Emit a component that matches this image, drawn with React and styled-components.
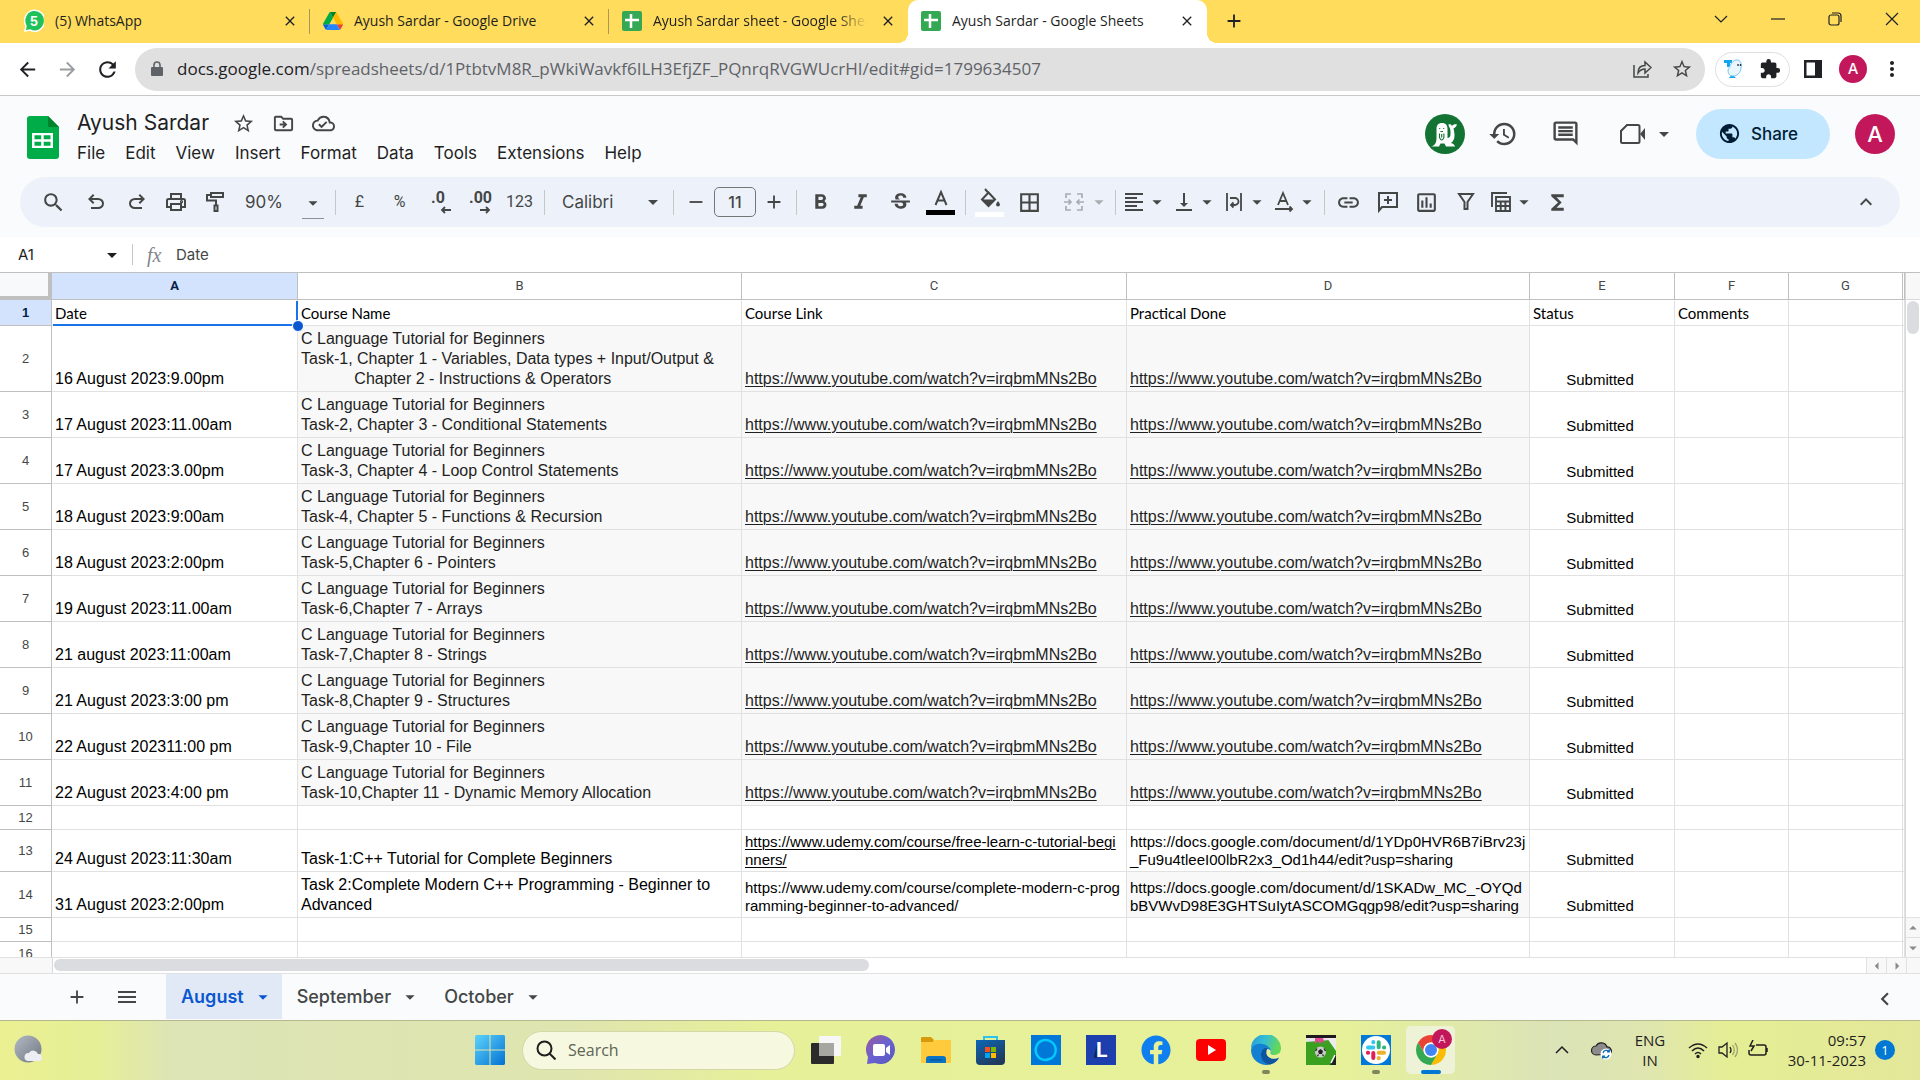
import React from 'react';
import styled, { createGlobalStyle, css } from 'styled-components';
import {
  MdAdd, MdArrowBack, MdArrowDropDown, MdArrowForward, MdArrowLeft, MdArrowRight,
  MdArrowDropUp, MdBorderAll, MdChevronLeft, MdClose, MdExtension, MdFormatAlignLeft,
  MdFormatBold, MdFormatColorFill, MdFormatItalic, MdFunctions, MdHistory,
  MdKeyboardArrowUp, MdLink, MdMenu, MdMoreVert, MdOutlineCloudDone,
  MdOutlineComment, MdOutlineDriveFileMove, MdOutlineInsertChart, MdPublic,
  MdRefresh, MdRemove, MdSearch, MdStarBorder, MdStrikethroughS, MdVerticalAlignBottom,
} from 'react-icons/md';
import { FaFacebook } from 'react-icons/fa';

const ui = '"Inter", "Roboto", sans-serif';
const system = '"Open Sans", "Noto Sans", sans-serif';
const arial = '"Liberation Sans", Arial, sans-serif';
const ink = '#444746';

const GlobalStyle = createGlobalStyle`
  *, *::before, *::after { box-sizing: border-box; }
  body { margin: 0; font-family: ${ui}; color: #1f1f1f; }
  button, input, select { margin: 0; padding: 0; border: 0; background: none; color: inherit; font: inherit; }
  svg { display: block; flex: none; }
`;

const Shell = styled.div`
  display: flex;
  flex-direction: column;
  height: 100vh;
  min-width: 1200px;
  overflow: hidden;
  background: #fff;
`;

/* ---------- browser frame ---------- */

const TabStrip = styled.header`
  display: flex;
  height: 43px;
  padding-left: 11px;
  background: #ffdc5c;
  font: 14px/20px ${system};
`;

const Tab = styled.div`
  position: relative;
  display: flex;
  align-items: center;
  gap: 11px;
  width: 299px;
  padding: 0 10px 2px 13px;
  ${(p) => p.$divider && css`
    &::after {
      content: '';
      position: absolute;
      right: 0;
      top: 9px;
      height: 25px;
      border-right: 1px solid #a8965a;
    }
  `}
  ${(p) => p.$active && css`
    background: #fff;
    border-radius: 10px 10px 0 0;
    &::before, &::after {
      content: '';
      position: absolute;
      bottom: 0;
      width: 10px;
      height: 10px;
    }
    &::before { left: -10px; background: radial-gradient(circle at 0 0, transparent 10px, #fff 10px); }
    &::after { right: -10px; background: radial-gradient(circle at 100% 0, transparent 10px, #fff 10px); }
  `}
`;

const TabTitle = styled.span`
  flex: 1;
  min-width: 0;
  overflow: hidden;
  white-space: nowrap;
  ${(p) => p.$fade && css`mask-image: linear-gradient(to right, #000 86%, transparent);`}
`;

const IconButton = styled.button`
  display: flex;
  align-items: center;
  justify-content: center;
  width: ${(p) => p.$w || 40}px;
  height: ${(p) => p.$h || 40}px;
  color: ${(p) => p.$color || ink};
  flex: none;
`;

const NewTab = styled(IconButton)`margin: 1px 0 0 7px;`;

const WindowControls = styled.div`
  display: flex;
  margin-left: auto;
`;

const AddressRow = styled.div`
  display: flex;
  align-items: center;
  height: 53px;
  padding: 0 4px 0 7px;
  border-bottom: 1px solid #c6c9cc;
  background: #fff;
`;

const UrlBox = styled.div`
  display: flex;
  flex: 1;
  align-items: center;
  height: 43px;
  margin: 0 10px 0 8px;
  padding: 0 3px 0 15px;
  border-radius: 22px;
  background: #e0e0e0;
  color: #5f6368;
  font: 17px/24px ${system};
`;

const UrlText = styled.a`
  flex: 1;
  margin-left: 13px;
  color: #5f6368;
  text-decoration: none;
  white-space: nowrap;
  b { color: #202124; font-weight: 400; }
`;

const ExtensionPill = styled.div`
  display: flex;
  align-items: center;
  justify-content: space-around;
  width: 75px;
  height: 35px;
  margin-right: 3px;
  border: 1px solid #dfdfe1;
  border-radius: 18px;
`;

const Avatar = styled.button`
  width: ${(p) => p.$size}px;
  height: ${(p) => p.$size}px;
  border-radius: 50%;
  background: #c2185b;
  color: #fff;
  font: ${(p) => (p.$size > 30 ? '500 22px/40px' : '500 15px/28px')} ${ui};
`;

const ProfileButton = styled(Avatar)`margin-left: 6px;`;

/* ---------- document header ---------- */

const DocHeader = styled.header`
  display: flex;
  height: 81px;
  padding: 0 25px 0 27px;
  background: #f9fbfd;
`;

const DocLogo = styled.div`padding-top: 20px;`;

const DocInfo = styled.div`
  flex: 1;
  padding: 10px 0 0 8px;
`;

const TitleRow = styled.div`
  display: flex;
  align-items: center;
  height: 34px;
  padding-left: 10px;
`;

const DocTitle = styled.h1`
  margin: 0 14px 0 0;
  font: 400 21px/32px ${ui};
`;

const MenuBar = styled.nav`
  display: flex;
  button { height: 26px; padding: 0 10px; font: 17px/26px ${ui}; }
`;

const DocActions = styled.div`
  display: flex;
  align-items: center;
  height: 75px;
`;

const CallButton = styled(IconButton)`
  justify-content: flex-end;
  gap: 6px;
`;

const ShareButton = styled.button`
  display: flex;
  align-items: center;
  gap: 10px;
  width: 134px;
  height: 50px;
  margin: 0 25px 0 20px;
  padding-left: 22px;
  border-radius: 25px;
  background: #c2e7ff;
  color: #001d35;
  font: 500 17px/24px ${ui};
`;

/* ---------- toolbar ---------- */

const ToolbarArea = styled.div`
  height: 60px;
  padding: 0 20px;
  background: #f9fbfd;
`;

const ToolbarBox = styled.div`
  display: flex;
  align-items: center;
  height: 50px;
  padding: 0 15px 0 9px;
  border-radius: 25px;
  background: #edf2fa;
  color: ${ink};
`;

const ToolGroup = styled.div`
  display: flex;
  align-items: center;
  gap: ${(p) => p.$gap || 0}px;
  padding: 0 4px;
  ${(p) => !p.$last && css`
    &::after {
      content: '';
      height: 25px;
      margin-left: 4px;
      margin-right: -4px;
      border-right: 1px solid #c7c7c7;
    }
  `}
`;

const Tool = styled.button`
  display: flex;
  align-items: center;
  justify-content: center;
  width: ${(p) => p.$w || 39}px;
  height: 37px;
  flex: none;
  font: 400 16px/20px "Roboto", sans-serif;
`;

const MergeTool = styled(Tool)`
  justify-content: flex-end;
  gap: 2px;
  opacity: 0.4;
`;

const SwatchTool = styled(Tool)`
  flex-direction: column;
  gap: 1px;
  &::after {
    content: '';
    width: 29px;
    height: 5px;
    background: ${(p) => p.$swatch};
  }
`;

const SelectWrap = styled.div`
  display: flex;
  align-items: center;
  padding-right: 4px;
  select {
    appearance: none;
    width: ${(p) => p.$w}px;
    height: 34px;
    padding-left: 13px;
    font: 17px/24px ${ui};
  }
  svg { margin-left: -32px; pointer-events: none; }
`;

const ZoomSelect = styled(SelectWrap)`
  padding-right: 7px;
  select { padding-left: 11px; }
  svg { box-sizing: content-box; margin-left: -31px; padding: 7px 0 4px; border-bottom: 1px solid #8d9197; }
`;

const SizeInput = styled.input`
  width: 42px;
  height: 30px;
  border: 1px solid #747775;
  border-radius: 5px;
  font: 500 16px/24px ${ui};
  text-align: center;
`;

const Spacer = styled.div`flex: 1;`;

/* ---------- formula bar ---------- */

const FormulaBar = styled.div`
  display: flex;
  align-items: center;
  height: 35px;
  padding-left: 18px;
  background: #fff;
`;

const NameBox = styled.input`
  width: 82px;
  font: 15px/20px ${ui};
`;

const Divider = styled.span`
  height: 21px;
  margin: 0 14px 0 8px;
  border-right: 1px solid #c7c7c7;
`;

const Fx = styled.span`
  width: 29px;
  color: #80868b;
  font: italic 20px/24px "Liberation Serif", serif;
`;

const FormulaInput = styled.input`
  flex: 1;
  color: ${ink};
  font: 15px/20px ${ui};
`;

/* ---------- sheet ---------- */

const SheetArea = styled.div`
  display: flex;
  flex: 1;
  min-height: 0;
  border-top: 1px solid #c0c0c0;
`;

const GridClip = styled.main`
  flex: 1;
  min-width: 0;
  overflow: hidden;
`;

const Grid = styled.table`
  width: 100%;
  table-layout: fixed;
  border-collapse: separate;
  border-spacing: 0;
`;

const ColHead = styled.th`
  height: 27px;
  padding: 0;
  border-right: 1px solid #c0c0c0;
  border-bottom: 1px solid #c0c0c0;
  background: ${(p) => (p.$selected ? '#d3e3fd' : '#fff')};
  color: ${(p) => (p.$selected ? '#041e49' : ink)};
  font: ${(p) => (p.$selected ? 700 : 400)} 13px/16px "Roboto", ${arial};
`;

const Corner = styled.td`
  border-right: 4px solid #c0c0c0;
  border-bottom: 4px solid #c0c0c0;
  background: #f8f9fa;
`;

const RowHead = styled(ColHead)`
  height: ${(p) => p.$h}px;
  font-family: ${arial};
`;

const Cell = styled.td`
  position: relative;
  height: ${(p) => p.$h}px;
  padding: 0 0 2px 3px;
  border-right: 1px solid #e1e1e1;
  border-bottom: 1px solid #e1e1e1;
  background: ${(p) => (p.$shade ? '#f8f8f8' : '#fff')};
  color: ${(p) => (p.$shade && !p.$small ? '#1f1f1f' : '#000')};
  font: ${(p) => (p.$small ? '15px/18px' : '16px/20px')} ${arial};
  vertical-align: bottom;
  white-space: pre;
  ${(p) => p.$head && css`font: 15px/20px "Lato", sans-serif;`}
  ${(p) => p.$center && css`padding: 0 4px 2px 0; text-align: center;`}
  a { color: inherit; text-underline-offset: 2px; text-decoration-thickness: 1px; }
`;

const SelectionFrame = styled.span`
  position: absolute;
  z-index: 1;
  inset: 1px -1px -1px 1px;
  border: solid #1a73e8;
  border-width: 0 2px 2px 0;
  &::after {
    content: '';
    position: absolute;
    right: -8px;
    bottom: -8px;
    width: 12px;
    height: 12px;
    border: 1px solid #fff;
    border-radius: 50%;
    background: #0b57d0;
  }
`;

const VScroll = styled.div`
  display: flex;
  flex-direction: column;
  width: 15px;
  border-left: 1px solid #d9d9d9;
  background: #fff;
`;

const VHead = styled.div`
  height: 27px;
  border-bottom: 1px solid #d9d9d9;
  background: #f8f8f8;
`;

const VThumb = styled.div`
  width: 12px;
  height: 33px;
  margin: 1px 1px auto;
  border-radius: 6px;
  background: #dadce0;
`;

const ScrollButton = styled.button`
  display: flex;
  align-items: center;
  justify-content: center;
  width: ${(p) => p.$w}px;
  height: ${(p) => p.$h}px;
  border: solid #e1e1e1;
  border-width: ${(p) => (p.$side ? '0 0 0 1px' : '1px 0 0')};
  background: #f8f8f8;
  color: #8a8a8a;
`;

const HScroll = styled.div`
  display: flex;
  height: 17px;
  border: solid #e1e1e1;
  border-width: 1px 0;
  background: #fff;
`;

const HCorner = styled.div`
  width: 53px;
  border-right: 1px solid #d9d9d9;
  background: #f8f8f8;
`;

const HTrack = styled.div`
  flex: 1;
  padding: 1px;
`;

const HThumb = styled.div`
  width: 45%;
  height: 12px;
  border-radius: 6px;
  background: #dadce0;
`;

/* ---------- sheet tabs ---------- */

const SheetBar = styled.footer`
  display: flex;
  height: 46px;
  padding: 0 15px 0 52px;
  background: #f9fbfd;
`;

const SheetTabs = styled.nav`
  display: flex;
  margin-left: 14px;
`;

const SheetTab = styled.button`
  display: flex;
  align-items: center;
  gap: 8px;
  height: 45px;
  padding: 0 8px 0 15px;
  background: ${(p) => (p.$active ? '#e1e9f7' : 'none')};
  color: ${(p) => (p.$active ? '#0b57d0' : ink)};
  font: ${(p) => (p.$active ? 600 : 500)} 18px/24px ${ui};
`;

/* ---------- taskbar ---------- */

const Taskbar = styled.footer`
  display: grid;
  grid-template-columns: 1fr auto 1fr;
  align-items: center;
  height: 60px;
  padding-bottom: 1px;
  border-top: 1px solid #b4b88c;
  background: linear-gradient(to right, #ebf092 0, #e5ef96 5%, #dde4b6 9%, #dfe5ae 30%, #e6f098 40%, #e6f19a 70%, #dbe3b8 81%, #dfe6ae 86%, #e5ee94 90%, #e3e79a 100%);
  font-family: ${system};
`;

const TaskSearch = styled.label`
  display: flex;
  align-items: center;
  gap: 12px;
  width: 273px;
  height: 39px;
  margin: 0 3px 0 5px;
  padding-left: 13px;
  border: 1px solid #d3d8a8;
  border-radius: 20px;
  background: #f6f9e0;
  color: #1f1f1f;
  input { width: 190px; font: 16px/24px ${system}; }
  input::placeholder { color: #606357; opacity: 1; }
`;

const TaskIcon = styled.button`
  position: relative;
  display: flex;
  align-items: center;
  justify-content: center;
  width: 55px;
  height: 48px;
  &::after {
    content: '';
    position: absolute;
    bottom: 0;
    width: ${(p) => (p.$active ? 20 : 8)}px;
    height: 4px;
    border-radius: 2px;
    background: ${(p) => (p.$active ? '#0078d4' : p.$open ? '#7f865c' : 'transparent')};
  }
  ${(p) => p.$active && css`
    width: 49px;
    margin: 0 3px;
    border-radius: 5px;
    background: #eef3d8;
  `}
`;

const ProfileDot = styled.span`
  position: absolute;
  top: 3px;
  right: 3px;
  width: 20px;
  height: 20px;
  border-radius: 50%;
  background: #c2185b;
  color: #f3c3d6;
  font: 11px/20px ${ui};
  text-align: center;
`;

const TaskLeft = styled.div`padding-left: 13px;`;

const TaskCenter = styled.div`
  display: flex;
  align-items: center;
`;

const Tray = styled.div`
  display: flex;
  align-items: center;
  justify-content: flex-end;
  padding-right: 25px;
`;

const TrayText = styled.div`
  width: ${(p) => p.$w}px;
  color: #1f1f1f;
  font: 15px/20px ${system};
  text-align: ${(p) => p.$align};
`;

const Notice = styled.span`
  width: 20px;
  height: 20px;
  margin-left: 9px;
  border-radius: 50%;
  background: #0078d4;
  color: #fff;
  font: 13px/20px ${system};
  text-align: center;
`;

/* ---------- drawings ---------- */

const Stroke = ({ s = 24, w = 2, vb = 24, children, fill = 'none' }) => (
  <svg width={s} height={s} viewBox={`0 0 ${vb} ${vb}`} fill={fill} stroke="currentColor" strokeWidth={w}>{children}</svg>
);
const Caret = ({ s = 24 }) => <MdArrowDropDown size={s} />;

const WhatsAppIcon = () => (
  <svg width="20" height="23" viewBox="0 0 20 23">
    <path d="M1 22 2 17A10 10.500 0 1 1 6 21Z" fill="#1fc15b" stroke="#fff" strokeWidth="1.500" />
    <text x="10" y="16.500" fill="#fff" fontSize="13" fontWeight="700" textAnchor="middle" fontFamily="Inter">5</text>
  </svg>
);
const DriveIcon = () => (
  <svg width="20" height="18" viewBox="0 0 87 78">
    <path d="m6.600 66.850 3.850 6.650c.8 1.400 1.950 2.500 3.300 3.300L27.500 53H0c0 1.550.4 3.100 1.200 4.500z" fill="#0066da" />
    <path d="M43.650 25 29.900 1.200c-1.350.8-2.500 1.900-3.300 3.300L1.200 48.500A9 9 0 0 0 0 53h27.500z" fill="#00ac47" />
    <path d="M73.550 76.800c1.350-.8 2.500-1.900 3.300-3.300l9.250-16c.8-1.400 1.200-2.950 1.200-4.500H59.800z" fill="#ea4335" />
    <path d="M43.650 25 57.400 1.200C56.050.4 54.500 0 52.900 0H34.400c-1.600 0-3.150.45-4.500 1.200z" fill="#00832d" />
    <path d="M59.800 53H27.500L13.750 76.800c1.350.8 2.900 1.200 4.500 1.200h50.800c1.600 0 3.150-.45 4.500-1.200z" fill="#2684fc" />
    <path d="M73.400 26.500 60.700 4.500c-.8-1.400-1.950-2.500-3.300-3.300L43.650 25 59.800 53h27.450c0-1.550-.4-3.100-1.200-4.500z" fill="#ffba00" />
  </svg>
);
const SheetsFavicon = () => (
  <svg width="20" height="20" viewBox="0 0 20 20">
    <rect width="20" height="20" rx="2" fill="#34a853" />
    <path d="M3 9h14M9 3v14" stroke="#fff" strokeWidth="2.500" />
  </svg>
);
const SheetsLogo = () => (
  <svg width="32" height="43" viewBox="0 0 32 43">
    <path d="M3 0h18l11 11v29a3 3 0 0 1-3 3H3a3 3 0 0 1-3-3V3a3 3 0 0 1 3-3z" fill="#00ac47" />
    <path d="M21 0l11 11H21z" fill="#00832d" />
    <path d="M5 17h21v15H5zM7.500 19.300v4h6.700v-4zm9.200 0v4h6.800v-4zM7.500 25.800v4h6.700v-4zm9.200 0v4h6.800v-4z" fill="#fff" fillRule="evenodd" />
  </svg>
);
const LockIcon = () => (
  <svg width="14" height="16" viewBox="0 0 14 16">
    <path d="M2 6h10q1 0 1 1v7q0 1-1 1H2q-1 0-1-1V7q0-1 1-1z" fill="currentColor" />
    <path d="M4 7V4a3 3 0 0 1 6 0v3" fill="none" stroke="currentColor" strokeWidth="1.600" />
  </svg>
);
const UndoIcon = ({ flip }) => (
  <svg width="24" height="24" viewBox="0 -960 960 960" fill="currentColor">
    <path transform={flip ? 'matrix(-1 0 0 1 960 0)' : undefined} d="M280-200v-80h284q63 0 109.500-40T720-420q0-60-46.500-100T564-560H312l104 104-56 56-200-200 200-200 56 56-104 104h252q97 0 166.500 63T800-420q0 94-69.500 157T564-200H280Z" />
  </svg>
);
const PrintIcon = () => (
  <Stroke><path d="M7 8V4h10v4M7 17H3v-6.500Q3 9 4.500 9h15Q21 9 21 10.500V17h-4M7 14h10v6H7z" /><circle cx="17.500" cy="11.700" r=".6" /></Stroke>
);
const PaintIcon = () => (
  <Stroke><path d="M8 3h12v4H8zM8 5H4v5.500h9V15M11.500 15.500h3V21h-3z" /></Stroke>
);
const DecimalIcon = ({ more }) => (
  <svg width="26" height="28" viewBox="0 0 26 28" fill="currentColor">
    <text x={more ? 2 : 4} y="15" fontSize="16" fontWeight="700" fontFamily="Roboto">{more ? '.00' : '.0'}</text>
    <path d={more ? 'M13 22h9M19 19l3 3-3 3' : 'M15 22h9M18 19l-3 3 3 3'} fill="none" stroke="currentColor" strokeWidth="1.800" />
  </svg>
);
const FillIcon = () => (
  <svg width="24" height="24" viewBox="0 0 24 24">
    <path d="m7 2 3.500 4M10.500 5.500 17 12.500l-6.500 6.500L4 12.500z" fill="none" stroke="currentColor" strokeWidth="2" />
    <path d="M4 12.500h13L10.500 19zM20 14q2 2.500 2 3.500a2 2 0 0 1-4 0q0-1 2-3.500" fill="currentColor" />
  </svg>
);
const MergeIcon = () => (
  <Stroke><path d="M9 4H4v4M4 16v4h5M15 4h5v4M20 16v4h-5M2 12h7M15 12h7M6.500 9.500 9 12l-2.500 2.500M17.500 9.500 15 12l2.500 2.500" strokeWidth="1.700" /></Stroke>
);
const WrapIcon = () => (
  <Stroke><path d="M5 3v18M19 3v18M8 8h5a3.500 3.500 0 0 1 0 7H9M11.500 12.500 9 15l2.500 2.500" strokeWidth="1.800" /></Stroke>
);
const RotateIcon = () => (
  <Stroke><path d="M6 15 11 3l5 12M8 11h6M3 19h17M17.500 16.500 20 19l-2.500 2.500" strokeWidth="1.800" /></Stroke>
);
const CommentPlusIcon = () => (
  <Stroke><path d="M3 3h18v14H6l-3 3.500zM12 6v8M8 10h8" /></Stroke>
);
const FilterIcon = () => (
  <Stroke><path d="M5 4h14l-5.500 8v7h-3v-7z" /></Stroke>
);
const TableViewIcon = () => (
  <Stroke><path d="M3 17V3h15M7 7h14v14H7zM7 11.500h14M7 16h14M11.700 11.500V21M16.400 11.500V21" strokeWidth="1.900" /></Stroke>
);
const CameraIcon = () => (
  <Stroke s={28} vb={28}><path d="M9 5h11a1.500 1.500 0 0 1 1.500 1.500v15A1.500 1.500 0 0 1 20 23H4.500A1.500 1.500 0 0 1 3 21.500V11z" /><path d="m22 14 5-6v12z" fill="currentColor" strokeWidth="0" /></Stroke>
);
const ShareArrow = () => (
  <Stroke s={20} w={1.5} vb={20}><path d="M2 6v12h14v-3M6 14c0-5 3-7.500 7-7.500V3l6 5.500-6 5.500v-4c-3 0-5 1-7 4z" /></Stroke>
);
const GhostIcon = () => (
  <svg width="20" height="21" viewBox="0 0 20 21">
    <path d="M0 1h8v3H6v4H3V4H0zM5 19l3-4 4 4z" fill="#12a5f4" />
    <path d="M4 11c2-3 3-9 8-10 5-.500 6 4 5 8-.500 5-4 8-8 8-4 0-5-3-5-6z" fill="#eaf6fd" stroke="#78c7f0" />
    <path d="M14 5v2M16.500 5v2" stroke="#234" strokeWidth="1.300" />
  </svg>
);
const WalrusIcon = () => (
  <svg width="40" height="40" viewBox="0 0 40 40">
    <circle cx="20" cy="20" r="20" fill="#137333" />
    <path d="M6 32.500c3-.5 5.500-3 5.500-8V15c0-4 2-6 5.500-6s5.500 2 5.500 6v9c1.500 0 3-1 3-4 0-2 0-4-.5-5.500-.5-1.500-2-3-1.500-4 1.500-.5 3 0 3.500 1.500 1-1.500 3-2 5-1.500-.5 2-2 3-3.500 4 .5 2 1 4 1 7 0 3.500-1.500 6-3.500 7.500 2 .5 3.500 1.500 4 3.500h-9l-1.500-3h-4l-1.500 3z" fill="#fff" />
    <path d="M14.500 19.500v4q2.200 5 4.400 0v-4M16.700 20v3.500M14.700 14v1M18.700 14v1M15.400 17.500H18" fill="none" stroke="#137333" strokeWidth="1.100" />
  </svg>
);
const WeatherIcon = () => (
  <svg width="30" height="32" viewBox="0 0 30 32">
    <defs><linearGradient id="moon" x2="1" y2="1"><stop stopColor="#b4bac4" /><stop offset="1" stopColor="#6f7782" /></linearGradient></defs>
    <circle cx="15" cy="15" r="13.500" fill="url(#moon)" />
    <path d="M15 27a4 4 0 0 1 1-8 5 5 0 0 1 9 1 3.500 3.500 0 0 1 1 7z" fill="#eceef3" />
  </svg>
);
const StartIcon = () => (
  <svg width="30" height="30" viewBox="0 0 30 30">
    <defs><linearGradient id="win" x2="1" y2="1"><stop stopColor="#5fd3fb" /><stop offset="1" stopColor="#0272d2" /></linearGradient></defs>
    <path d="M1 0h13.500v14.500H0V1zM15.500 0H29l1 1v13.500H15.500zM0 15.500h14.500V30H1l-1-1zM15.500 15.500H30V29l-1 1H15.500z" fill="url(#win)" />
  </svg>
);
const TaskViewIcon = () => (
  <svg width="30" height="30" viewBox="0 0 30 30">
    <rect y="8" width="23" height="21" rx="1" fill="#2b2b2b" />
    <rect x="8" y="1" width="22" height="20" rx="1" fill="#f7f7f7" />
    <path d="M8 8h15v13H8z" fill="#a5a7a0" />
  </svg>
);
const MeetIcon = () => (
  <svg width="30" height="30" viewBox="0 0 30 30">
    <defs><linearGradient id="chat" x2="1" y2="1"><stop stopColor="#9a5a9c" /><stop offset=".5" stopColor="#6a62d0" /><stop offset="1" stopColor="#5558c0" /></linearGradient></defs>
    <path d="M1 29 2 22A14.500 14.500 0 1 1 9 28z" fill="url(#chat)" />
    <rect x="7" y="9" width="12" height="12" rx="2" fill="#fff" /><path d="m20 13 4-3v10l-4-3z" fill="#fff" />
  </svg>
);
const FolderIcon = () => (
  <svg width="30" height="30" viewBox="0 0 30 30">
    <path d="M0 3q0-1 1-1h9l3 3-2 4H0z" fill="#d79a0b" />
    <path d="M0 7h12l2-2h15q1 0 1 1v22H0z" fill="#ffcb3d" />
    <path d="M5 28v-4q0-3 3-3h14q3 0 3 3v4z" fill="#0b72c5" /><path d="M9 25h12" stroke="#0a4a84" />
  </svg>
);
const StoreIcon = () => (
  <svg width="30" height="30" viewBox="0 0 30 30">
    <defs><linearGradient id="bag" x2=".6" y2="1"><stop stopColor="#0b68b8" /><stop offset="1" stopColor="#20395c" /></linearGradient></defs>
    <path d="M8 6V2h13v4" fill="none" stroke="#2cc3ec" strokeWidth="2" />
    <path d="M0 5h29v21q0 4-4 4H4q-4 0-4-4z" fill="url(#bag)" />
    <path d="M9 12h5v5H9z" fill="#f25022" /><path d="M15 12h5v5h-5z" fill="#7fba00" />
    <path d="M9 18h5v5H9z" fill="#00a4ef" /><path d="M15 18h5v5h-5z" fill="#ffb900" />
  </svg>
);
const AlexaIcon = () => (
  <svg width="30" height="30" viewBox="0 0 30 30">
    <path d="M0 0h30v30H0z" fill="#0078d7" />
    <path d="M14 25A10 10 0 1 1 20 23.500Q16 25 14 25" fill="none" stroke="#05c8fb" strokeWidth="2.500" />
  </svg>
);
const LIcon = () => (
  <svg width="30" height="30" viewBox="0 0 30 30">
    <path d="M0 0h30v30H0z" fill="#1d3fae" /><path d="M8 21 11 9v14H8z" fill="#0f2a52" />
    <text x="10" y="22" fill="#fff" fontSize="21" fontWeight="700" fontFamily="Roboto">L</text>
  </svg>
);
const YouTubeIcon = () => (
  <svg width="30" height="22" viewBox="0 0 30 22"><rect width="30" height="22" rx="4" fill="#f00" /><path d="m12 6 8 5-8 5z" fill="#fff" /></svg>
);
const EdgeIcon = () => (
  <svg width="30" height="30" viewBox="0 0 30 30">
    <defs><linearGradient id="edge" x2="1" y2=".3"><stop stopColor="#2196dc" /><stop offset=".5" stopColor="#35bfd4" /><stop offset="1" stopColor="#63d75a" /></linearGradient></defs>
    <path d="M0 14A15 14.500 0 0 1 30 13c0 5-3 7-7 7-3 0-4.500-1.500-3.500-3 1-2-1.500-6-7.500-7-6 0-11 1-12 4z" fill="url(#edge)" />
    <path d="M0 15C1 10 6 8 11 9c5 .5 8.500 3.500 9 7-3-3.500-8-3-9.500 1-1.500 5 2.500 11 7.500 12.700A15 15 0 0 1 0 15z" fill="#1480d2" />
    <path d="M10.500 16.500C8.500 22 12 28 18 29.700c5-.7 9-4 10-7.200-4 2.500-11 1.500-12.500-3.500-.5-3 .5-5 1.500-5.700-3-.8-5.500.7-6.500 3.200z" fill="#0d55a0" />
  </svg>
);
const FootballIcon = () => (
  <svg width="30" height="30" viewBox="0 0 30 30">
    <path d="M0 0h30v30H0z" fill="#3aa120" /><path d="M0 0h30v3H0z" fill="#20181f" />
    <path d="M0 3h24v2L0 7z" fill="#e9dfe6" /><path d="M9 3h8l2 6-3-3-2 3-2-3-3 3z" fill="#e04a94" />
    <path d="M21 3h9v13z" fill="#ececec" /><path d="M24 30l6-11v11z" fill="#20221f" /><path d="m25 28 4-8" stroke="#fff" strokeWidth="1.500" />
    <circle cx="14.500" cy="17" r="5.500" fill="#c9cbc9" /><path d="m14.500 14 2.500 2-1 3h-3l-1-3z" fill="#222" />
    <path d="M9.500 16l1.500-2.500M19.500 16l-1.500-2.500M11.500 21l1-1.500M17.500 21l-1-1.500" stroke="#222" strokeWidth="1.300" />
  </svg>
);
const SlackIcon = () => (
  <svg width="30" height="30" viewBox="0 0 30 30">
    <path d="M0 0h30v30H0z" fill="#0078d7" /><circle cx="15" cy="15" r="14" fill="#fff" />
    <g strokeWidth="4" strokeLinecap="round">
      <path d="M12.300 7v.2M7 12.400h5.300" stroke="#36c5f0" /><path d="M17.700 7.200v5M23 12.400h.2" stroke="#2eb67d" />
      <path d="M17.700 17.800H23M17.700 23v.2" stroke="#ecb22e" /><path d="M12.300 18v5M6.900 17.800h.2" stroke="#e01e5a" />
    </g>
  </svg>
);
const ChromeIcon = () => (
  <svg width="30" height="30" viewBox="4 4 40 40">
    <path d="M24 14h17.320A20 20 0 0 0 6.680 14l8.660 15A10 10 0 0 1 24 14" fill="#ea4335" />
    <path d="M32.660 29 24 44A20 20 0 0 0 41.320 14H24a10 10 0 0 1 8.660 15" fill="#fbbc04" />
    <path d="M15.340 29 6.680 14A20 20 0 0 0 24 44l8.660-15a10 10 0 0 1-17.320 0" fill="#34a853" />
    <circle cx="24" cy="24" r="10" fill="#fff" /><circle cx="24" cy="24" r="8" fill="#4285f4" />
  </svg>
);
const CloudSyncIcon = () => (
  <svg width="22" height="20" viewBox="0 0 22 20">
    <path d="M5 15a4.500 4.500 0 0 1 0-9 6 6 0 0 1 11 1 4 4 0 0 1 3 7z" fill="#8c8c8c" stroke="#222" strokeWidth="1.200" />
    <circle cx="15" cy="14" r="5.500" fill="#fff" />
    <path d="M12 13a3.500 3.500 0 0 1 6-1.500M18 15a3.500 3.500 0 0 1-6 1.500M18.300 9.500v2.300H16M11.700 18.500v-2.300H14" fill="none" stroke="#0a6fc2" strokeWidth="1.300" />
  </svg>
);

/* ---------- content ---------- */

const yt = 'https://www.youtube.com/watch?v=irqbmMNs2Bo';
const lead = 'C Language Tutorial for Beginners\n';
const lessons = [
  ['16 August 2023:9.00pm', 'Task-1, Chapter 1 - Variables, Data types + Input/Output &\n            Chapter 2 - Instructions & Operators', 66],
  ['17 August 2023:11.00am', 'Task-2, Chapter 3 - Conditional Statements'],
  ['17 August 2023:3.00pm', 'Task-3, Chapter 4 - Loop Control Statements'],
  ['18 August 2023:9:00am', 'Task-4, Chapter 5 - Functions & Recursion'],
  ['18 August 2023:2:00pm', 'Task-5,Chapter 6 - Pointers'],
  ['19 August 2023:11.00am', 'Task-6,Chapter 7 - Arrays'],
  ['21 august 2023:11:00am', 'Task-7,Chapter 8 - Strings'],
  ['21 August 2023:3:00 pm', 'Task-8,Chapter 9 - Structures'],
  ['22 August 202311:00 pm', 'Task-9,Chapter 10 - File'],
  ['22 August 2023:4:00 pm', 'Task-10,Chapter 11 - Dynamic Memory Allocation'],
];

const link = (text) => ({ text, link: true });
const rows = [
  { h: 26, head: true, cells: ['Date', 'Course Name', 'Course Link', 'Practical Done', 'Status', 'Comments'] },
  ...lessons.map(([date, task, h = 46]) => ({
    h,
    cells: [date, { text: lead + task, shade: true }, { ...link(yt), shade: true }, { ...link(yt), shade: true }, 'Submitted'],
  })),
  { h: 24, cells: [] },
  {
    h: 42,
    cells: ['24 August 2023:11:30am', 'Task-1:C++ Tutorial for Complete Beginners',
      { ...link('https://www.udemy.com/course/free-learn-c-tutorial-begi\nnners/'), small: true },
      { text: 'https://docs.google.com/document/d/1YDp0HVR6B7iBrv23j\n_Fu9u4tleeI00lbR2x3_Od1h44/edit?usp=sharing', small: true }, 'Submitted'],
  },
  {
    h: 46,
    cells: ['31 August 2023:2:00pm', 'Task 2:Complete Modern C++ Programming - Beginner to\nAdvanced',
      { text: 'https://www.udemy.com/course/complete-modern-c-prog\nramming-beginner-to-advanced/', small: true },
      { text: 'https://docs.google.com/document/d/1SKADw_MC_-OYQd\nbBVWvD98E3GHTSuIytASCOMGqgp98/edit?usp=sharing', small: true, shade: true }, 'Submitted'],
  },
  { h: 24, cells: [] },
  { h: 24, cells: [] },
];

const columns = [['A', 246], ['B', 444], ['C', 385], ['D', 403], ['E', 145], ['F', 114], ['G', 114], ['', undefined]];
const tabs = [
  { id: 'chat', title: '(5) WhatsApp', icon: <WhatsAppIcon />, divider: true },
  { id: 'drive', title: 'Ayush Sardar - Google Drive', icon: <DriveIcon />, divider: true },
  { id: 'sheet', title: 'Ayush Sardar sheet - Google Sheets', icon: <SheetsFavicon />, fade: true },
  { id: 'current', title: 'Ayush Sardar - Google Sheets', icon: <SheetsFavicon />, active: true },
];
const menus = ['File', 'Edit', 'View', 'Insert', 'Format', 'Data', 'Tools', 'Extensions', 'Help'];

function Sheet() {
  return (
    <Grid>
      <colgroup>
        <col width="52" />
        {columns.map(([name, w]) => <col key={name} width={w} />)}
      </colgroup>
      <thead>
        <tr>
          <Corner />
          {columns.map(([name]) => <ColHead key={name} scope="col" $selected={name === 'A'}>{name}</ColHead>)}
        </tr>
      </thead>
      <tbody>
        {rows.map((row, r) => (
          <tr key={r}>
            <RowHead scope="row" $h={row.h} $selected={r === 0}>{r + 1}</RowHead>
            {columns.map(([name], c) => {
              const raw = row.cells[c];
              const cell = typeof raw === 'object' ? raw : { text: raw };
              const center = c === 4 && !row.head;
              return (
                <Cell key={name} $h={row.h} $head={row.head} $shade={cell.shade} $small={cell.small || center} $center={center}>
                  {cell.link ? <a href={cell.text.replace('\n', '')}>{cell.text}</a> : cell.text}
                  {r === 0 && c === 0 && <SelectionFrame />}
                </Cell>
              );
            })}
          </tr>
        ))}
      </tbody>
    </Grid>
  );
}

function Toolbar() {
  return (
    <ToolbarArea>
      <ToolbarBox role="toolbar">
        <ToolGroup>
          <Tool aria-label="Search" $w={41}><MdSearch size={25} /></Tool>
          <Tool aria-label="Undo" $w={43}><UndoIcon /></Tool>
          <Tool aria-label="Redo"><UndoIcon flip /></Tool>
          <Tool aria-label="Print"><PrintIcon /></Tool>
          <Tool aria-label="Paint format"><PaintIcon /></Tool>
          <ZoomSelect $w={99}><select aria-label="Zoom"><option>90%</option></select><Caret s={22} /></ZoomSelect>
        </ToolGroup>
        <ToolGroup $gap={1}>
          <Tool>£</Tool>
          <Tool>%</Tool>
          <Tool aria-label="Decrease decimals"><DecimalIcon /></Tool>
          <Tool aria-label="Increase decimals"><DecimalIcon more /></Tool>
          <Tool>123</Tool>
        </ToolGroup>
        <ToolGroup>
          <SelectWrap $w={124}><select aria-label="Font"><option>Calibri</option></select><Caret /></SelectWrap>
        </ToolGroup>
        <ToolGroup>
          <Tool aria-label="Smaller" $w={36}><MdRemove size={22} /></Tool>
          <SizeInput aria-label="Font size" defaultValue="11" />
          <Tool aria-label="Larger" $w={36}><MdAdd size={22} /></Tool>
        </ToolGroup>
        <ToolGroup $gap={1}>
          <Tool aria-label="Bold"><MdFormatBold size={25} /></Tool>
          <Tool aria-label="Italic"><MdFormatItalic size={25} /></Tool>
          <Tool aria-label="Strikethrough"><MdStrikethroughS size={25} /></Tool>
          <SwatchTool aria-label="Text colour" $swatch="#000"><Stroke s={20} vb={20}><path d="M4.500 16 10 3l5.500 13M6.500 11.500h7" /></Stroke></SwatchTool>
        </ToolGroup>
        <ToolGroup $gap={1}>
          <SwatchTool aria-label="Fill colour" $swatch="#fff"><FillIcon /></SwatchTool>
          <Tool aria-label="Borders"><MdBorderAll size={25} /></Tool>
          <MergeTool aria-label="Merge cells" $w={60}><MergeIcon /><Caret s={22} /></MergeTool>
        </ToolGroup>
        <ToolGroup>
          <Tool aria-label="Horizontal align" $w={50}><MdFormatAlignLeft size={24} /><Caret s={22} /></Tool>
          <Tool aria-label="Vertical align" $w={50}><MdVerticalAlignBottom size={24} /><Caret s={22} /></Tool>
          <Tool aria-label="Text wrapping" $w={50}><WrapIcon /><Caret s={22} /></Tool>
          <Tool aria-label="Text rotation" $w={50}><RotateIcon /><Caret s={22} /></Tool>
        </ToolGroup>
        <ToolGroup $last>
          <Tool aria-label="Insert link"><MdLink size={25} /></Tool>
          <Tool aria-label="Insert comment"><CommentPlusIcon /></Tool>
          <Tool aria-label="Insert chart"><MdOutlineInsertChart size={25} /></Tool>
          <Tool aria-label="Filter"><FilterIcon /></Tool>
          <Tool aria-label="Table views" $w={53}><TableViewIcon /><Caret s={22} /></Tool>
          <Tool aria-label="Functions"><MdFunctions size={25} /></Tool>
        </ToolGroup>
        <Spacer />
        <Tool aria-label="Hide menus"><MdKeyboardArrowUp size={24} /></Tool>
      </ToolbarBox>
    </ToolbarArea>
  );
}

function Browser() {
  return (
    <>
      <TabStrip>
        {tabs.map((t) => (
          <Tab key={t.id} $active={t.active} $divider={t.divider}>
            {t.icon}
            <TabTitle $fade={t.fade}>{t.title}</TabTitle>
            <IconButton aria-label="Close tab" $w={20} $h={20} $color="#202124"><MdClose size={16} /></IconButton>
          </Tab>
        ))}
        <NewTab aria-label="New tab" $color="#202124"><MdAdd size={22} /></NewTab>
        <WindowControls>
          <IconButton aria-label="Search tabs" $w={57} $h={37} $color="#202124"><Stroke s={14} w={1.2} vb={14}><path d="m1 4 6 6 6-6" /></Stroke></IconButton>
          <IconButton aria-label="Minimise" $w={57} $h={37} $color="#202124"><Stroke s={14} w={1.2} vb={14}><path d="M0 7h14" /></Stroke></IconButton>
          <IconButton aria-label="Restore" $w={57} $h={37} $color="#202124"><Stroke s={14} w={1.2} vb={14}><rect x="1" y="3" width="10" height="10" rx="2" /><path d="M4 1h6q3 0 3 3v6" /></Stroke></IconButton>
          <IconButton aria-label="Close" $w={57} $h={37} $color="#202124"><Stroke s={14} w={1.2} vb={14}><path d="m1 1 12 12M13 1 1 13" /></Stroke></IconButton>
        </WindowControls>
      </TabStrip>
      <AddressRow>
        <IconButton aria-label="Back" $color="#202124"><MdArrowBack size={23} /></IconButton>
        <IconButton aria-label="Forward" $color="#9a9da1"><MdArrowForward size={23} /></IconButton>
        <IconButton aria-label="Reload" $color="#202124"><MdRefresh size={25} /></IconButton>
        <UrlBox>
          <LockIcon />
          <UrlText href="#sheet"><b>docs.google.com</b>/spreadsheets/d/1PtbtvM8R_pWkiWavkf6ILH3EfjZF_PQnrqRVGWUcrHI/edit#gid=1799634507</UrlText>
          <IconButton aria-label="Share page"><ShareArrow /></IconButton>
          <IconButton aria-label="Bookmark"><MdStarBorder size={22} /></IconButton>
        </UrlBox>
        <ExtensionPill><GhostIcon /><MdExtension size={22} color="#202124" /></ExtensionPill>
        <IconButton aria-label="Side panel" $color="#202124"><svg width="18" height="18" viewBox="0 0 18 18"><path d="M0 0h18v18H0zm2.500 2.500v13H11v-13z" fill="currentColor" fillRule="evenodd" /></svg></IconButton>
        <ProfileButton $size={28}>A</ProfileButton>
        <IconButton aria-label="Browser menu" $w={49} $color="#202124"><MdMoreVert size={24} /></IconButton>
      </AddressRow>
    </>
  );
}

function Document() {
  return (
    <DocHeader>
      <DocLogo><SheetsLogo /></DocLogo>
      <DocInfo>
        <TitleRow>
          <DocTitle>Ayush Sardar</DocTitle>
          <IconButton aria-label="Star" $h={34}><MdStarBorder size={23} /></IconButton>
          <IconButton aria-label="Move" $h={34}><MdOutlineDriveFileMove size={23} /></IconButton>
          <IconButton aria-label="Saved to Drive" $h={34}><MdOutlineCloudDone size={23} /></IconButton>
        </TitleRow>
        <MenuBar>{menus.map((m) => <button key={m}>{m}</button>)}</MenuBar>
      </DocInfo>
      <DocActions>
        <WalrusIcon />
        <IconButton aria-label="History" $w={75}><MdHistory size={30} /></IconButton>
        <IconButton aria-label="Comments" $w={50}><MdOutlineComment size={29} /></IconButton>
        <CallButton aria-label="Call" $w={86}><CameraIcon /><Caret /></CallButton>
        <ShareButton><MdPublic size={23} />Share</ShareButton>
        <Avatar $size={40}>A</Avatar>
      </DocActions>
    </DocHeader>
  );
}

function WindowsTaskbar() {
  const apps = [
    [<TaskViewIcon />, 'Task view'], [<MeetIcon />, 'Chat'], [<FolderIcon />, 'Explorer'], [<StoreIcon />, 'Store'],
    [<AlexaIcon />, 'Alexa'], [<LIcon />, 'Lenovo'], [<FaFacebook size={30} color="#0f7ff0" />, 'Facebook'],
    [<YouTubeIcon />, 'YouTube'], [<EdgeIcon />, 'Edge', true], [<FootballIcon />, 'Football'], [<SlackIcon />, 'Slack', true],
  ];
  return (
    <Taskbar>
      <TaskLeft><WeatherIcon /></TaskLeft>
      <TaskCenter>
        <TaskIcon aria-label="Start"><StartIcon /></TaskIcon>
        <TaskSearch><Stroke s={20} vb={20}><circle cx="8.500" cy="8.500" r="7" /><path d="m13.500 13.500 6 6" /></Stroke><input placeholder="Search" aria-label="Search" /></TaskSearch>
        {apps.map(([icon, name, open]) => <TaskIcon key={name} aria-label={name} $open={open}>{icon}</TaskIcon>)}
        <TaskIcon aria-label="Chrome" $active><ChromeIcon /><ProfileDot>A</ProfileDot></TaskIcon>
      </TaskCenter>
      <Tray>
        <IconButton aria-label="Hidden icons" $color="#1f1f1f"><Stroke s={14} w={1.5} vb={14}><path d="m1 10 6-6 6 6" /></Stroke></IconButton>
        <IconButton aria-label="OneDrive"><CloudSyncIcon /></IconButton>
        <TrayText $w={56} $align="center">ENG<br />IN</TrayText>
        <IconButton aria-label="Wi-Fi" $color="#1f1f1f"><Stroke s={20} w={1.5} vb={20}><path d="M1 8q9-8 18 0M4 11q6-6 12 0M7 14q3-3 6 0" /><circle cx="10" cy="16.500" r="1" fill="currentColor" /></Stroke></IconButton>
        <IconButton aria-label="Volume" $w={20} $color="#1f1f1f"><Stroke s={20} w={1.3} vb={20}><path d="M1 7h3l5-4v14l-5-4H1zM12 7q2 3 0 6" /><path d="M14.500 5q3.500 5 0 10M17 3q5 7 0 14" opacity=".35" /></Stroke></IconButton>
        <IconButton aria-label="Battery" $color="#1f1f1f"><Stroke s={20} w={1.5} vb={20}><path d="M8 5h8q2 0 2 2v6q0 2-2 2H3q-2 0-2-2v-3M19 8v4M5 0 2 6h4L3 11" /></Stroke></IconButton>
        <TrayText $w={88} $align="right">09:57<br />30-11-2023</TrayText>
        <Notice>1</Notice>
      </Tray>
    </Taskbar>
  );
}

export default function App() {
  return (
    <Shell>
      <GlobalStyle />
      <Browser />
      <Document />
      <Toolbar />
      <FormulaBar>
        <NameBox aria-label="Name box" defaultValue="A1" />
        <Caret />
        <Divider />
        <Fx>fx</Fx>
        <FormulaInput aria-label="Formula" defaultValue="Date" />
      </FormulaBar>
      <SheetArea>
        <GridClip><Sheet /></GridClip>
        <VScroll>
          <VHead />
          <VThumb />
          <ScrollButton aria-label="Scroll up" $w={14} $h={20}><MdArrowDropUp size={18} /></ScrollButton>
          <ScrollButton aria-label="Scroll down" $w={14} $h={20}><MdArrowDropDown size={18} /></ScrollButton>
        </VScroll>
      </SheetArea>
      <HScroll>
        <HCorner />
        <HTrack><HThumb /></HTrack>
        <ScrollButton aria-label="Scroll left" $side $w={20} $h={15}><MdArrowLeft size={18} /></ScrollButton>
        <ScrollButton aria-label="Scroll right" $side $w={20} $h={15}><MdArrowRight size={18} /></ScrollButton>
        <ScrollButton as="span" $side $w={14} $h={15} />
      </HScroll>
      <SheetBar>
        <IconButton aria-label="Add sheet" $w={50} $h={46}><MdAdd size={22} /></IconButton>
        <IconButton aria-label="All sheets" $w={50} $h={46}><MdMenu size={24} /></IconButton>
        <SheetTabs>
          <SheetTab $active>August<Caret s={22} /></SheetTab>
          <SheetTab>September<Caret s={22} /></SheetTab>
          <SheetTab>October<Caret s={22} /></SheetTab>
        </SheetTabs>
        <Spacer />
        <IconButton aria-label="Show side panel" $h={50}><MdChevronLeft size={26} /></IconButton>
      </SheetBar>
      <WindowsTaskbar />
    </Shell>
  );
}
